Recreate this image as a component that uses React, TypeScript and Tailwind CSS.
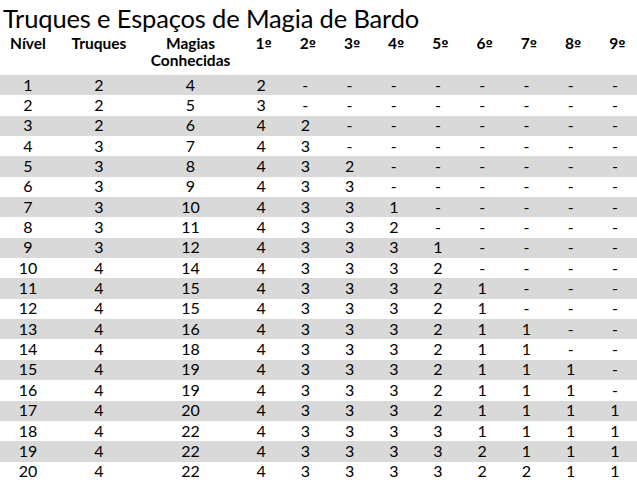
const rows: string[][] = [
  ["1", "2", "4", "2", "-", "-", "-", "-", "-", "-", "-", "-"],
  ["2", "2", "5", "3", "-", "-", "-", "-", "-", "-", "-", "-"],
  ["3", "2", "6", "4", "2", "-", "-", "-", "-", "-", "-", "-"],
  ["4", "3", "7", "4", "3", "-", "-", "-", "-", "-", "-", "-"],
  ["5", "3", "8", "4", "3", "2", "-", "-", "-", "-", "-", "-"],
  ["6", "3", "9", "4", "3", "3", "-", "-", "-", "-", "-", "-"],
  ["7", "3", "10", "4", "3", "3", "1", "-", "-", "-", "-", "-"],
  ["8", "3", "11", "4", "3", "3", "2", "-", "-", "-", "-", "-"],
  ["9", "3", "12", "4", "3", "3", "3", "1", "-", "-", "-", "-"],
  ["10", "4", "14", "4", "3", "3", "3", "2", "-", "-", "-", "-"],
  ["11", "4", "15", "4", "3", "3", "3", "2", "1", "-", "-", "-"],
  ["12", "4", "15", "4", "3", "3", "3", "2", "1", "-", "-", "-"],
  ["13", "4", "16", "4", "3", "3", "3", "2", "1", "1", "-", "-"],
  ["14", "4", "18", "4", "3", "3", "3", "2", "1", "1", "-", "-"],
  ["15", "4", "19", "4", "3", "3", "3", "2", "1", "1", "1", "-"],
  ["16", "4", "19", "4", "3", "3", "3", "2", "1", "1", "1", "-"],
  ["17", "4", "20", "4", "3", "3", "3", "2", "1", "1", "1", "1"],
  ["18", "4", "22", "4", "3", "3", "3", "3", "1", "1", "1", "1"],
  ["19", "4", "22", "4", "3", "3", "3", "3", "2", "1", "1", "1"],
  ["20", "4", "22", "4", "3", "3", "3", "3", "2", "2", "1", "1"],
];

const slots = ["1", "2", "3", "4", "5", "6", "7", "8", "9"];

// column widths follow the spreadsheet: 56 / 86 / 97, then nine slot columns
const cols = "grid grid-cols-[56px_86px_97px_repeat(9,minmax(0,1fr))]";

export default function App() {
  return (
    <div className="w-[637px] h-[485px] overflow-hidden bg-white text-black font-['Lato','Liberation_Sans',sans-serif]">
      <h1 className="pl-[3px] pt-[3px] h-[35px] text-[25.5px] leading-[30px] tracking-[-0.15px]">
        Truques e Espaços de Magia de Bardo
      </h1>

      <div className={`${cols} h-[40px] text-[15.5px] font-bold leading-[17px]`}>
        <div className="text-center">Nível</div>
        <div className="text-center">Truques</div>
        <div className="text-center">
          Magias
          <br />
          Conhecidas
        </div>
        {slots.map((s) => (
          <div key={s} className="pl-[5px] text-center">
            {s}
            <span className="font-['DejaVu_Sans',sans-serif] text-[13px]">º</span>
          </div>
        ))}
      </div>

      <div>
        {rows.map((r, i) => (
          <div
            key={r[0]}
            className={`${cols} h-[20.35px] items-center pb-[1px] text-[16px] leading-[18px] ${
              i % 2 === 0 ? "bg-[#d9d9d9]" : "bg-white"
            }`}
          >
            {r.map((v, j) => (
              <div key={j} className="text-center">
                {v}
              </div>
            ))}
          </div>
        ))}
      </div>
    </div>
  );
}
